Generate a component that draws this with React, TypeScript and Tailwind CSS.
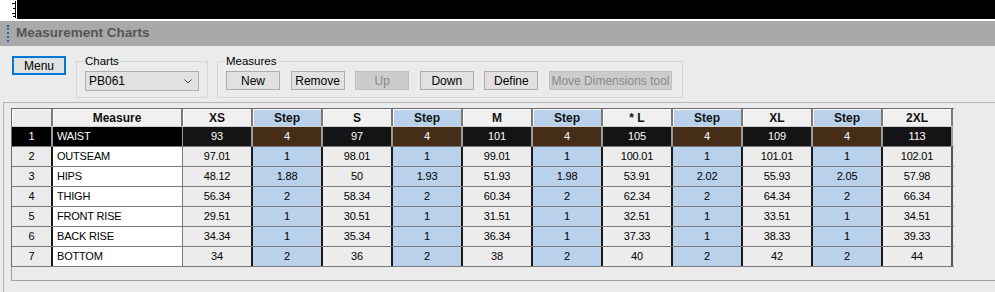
import React from "react";

const headers = ["XS", "Step", "S", "Step", "M", "Step", "* L", "Step", "XL", "Step", "2XL"];

const rows: [string, string[]][] = [
  ["WAIST", ["93", "4", "97", "4", "101", "4", "105", "4", "109", "4", "113"]],
  ["OUTSEAM", ["97.01", "1", "98.01", "1", "99.01", "1", "100.01", "1", "101.01", "1", "102.01"]],
  ["HIPS", ["48.12", "1.88", "50", "1.93", "51.93", "1.98", "53.91", "2.02", "55.93", "2.05", "57.98"]],
  ["THIGH", ["56.34", "2", "58.34", "2", "60.34", "2", "62.34", "2", "64.34", "2", "66.34"]],
  ["FRONT RISE", ["29.51", "1", "30.51", "1", "31.51", "1", "32.51", "1", "33.51", "1", "34.51"]],
  ["BACK RISE", ["34.34", "1", "35.34", "1", "36.34", "1", "37.33", "1", "38.33", "1", "39.33"]],
  ["BOTTOM", ["34", "2", "36", "2", "38", "2", "40", "2", "42", "2", "44"]],
];

function Btn({ label, disabled = false, w = "w-[54px]" }: { label: string; disabled?: boolean; w?: string }) {
  return (
    <div
      className={`${w} h-[19px] border flex items-center justify-center text-[12px] leading-none ${
        disabled ? "border-[#bfbfbf] bg-[#cccccc] text-[#8a8a8a]" : "border-[#adadad] bg-[#e1e1e1] text-black"
      }`}
    >
      {label}
    </div>
  );
}

function Group({ label, children, w }: { label: string; children: React.ReactNode; w: string }) {
  return (
    <div className={`relative ${w} h-[37px] mt-[5px] border border-[#d6d6d6] pl-[8px] pt-[9px]`}>
      <span className="absolute left-[7px] top-[-8px] bg-[#ebebeb] px-[1px] text-[11.5px] leading-[14px] text-black">
        {label}
      </span>
      {children}
    </div>
  );
}

export default function App() {
  return (
    <div
      className="w-[995px] h-[292px] overflow-hidden bg-[#ebebeb] flex flex-col"
      style={{ fontFamily: '"Liberation Sans", Arial, sans-serif' }}
    >
      {/* top strip */}
      <div className="flex h-[19px]">
        <div className="w-[17px] bg-white">
          <svg width="17" height="19" viewBox="0 0 17 19">
            <path d="M15.5 1v17" stroke="#000" strokeWidth="1" />
            <path d="M12 3.5h4M13 8.5h3M12 13.5h4M13 16.5h3" stroke="#000" strokeWidth="1" />
          </svg>
        </div>
        <div className="flex-1 bg-black" />
      </div>
      <div className="h-[2px] bg-white" />
      <div className="h-[25px] bg-[#a9a9a9] flex items-center">
        <div className="ml-[7px] h-[17px] border-l-2 border-dotted border-[#2f5fb3]" />
        <span className="ml-[7px] text-[13.5px] font-bold text-[#565656]">Measurement Charts</span>
      </div>

      {/* toolbar */}
      <div className="flex items-start pl-[12px] pt-[10px] gap-[10px]">
        <div className="w-[54px] h-[19px] border-2 border-[#0078d7] bg-[#e1e1e1] flex items-center justify-center text-[12px] leading-none">
          Menu
        </div>
        <Group label="Charts" w="w-[132px]">
          <div className="w-[114px] h-[20px] border border-[#adadad] bg-[#e1e1e1] flex items-center justify-between pl-[3px] pr-[6px] text-[12px]">
            <span>PB061</span>
            <svg width="8" height="5" viewBox="0 0 8 5">
              <path d="M0.5 0.5L4 4L7.5 0.5" fill="none" stroke="#444" strokeWidth="1" />
            </svg>
          </div>
        </Group>
        <div className="-ml-[1px]">
          <Group label="Measures" w="w-[466px]">
            <div className="flex gap-[10.6px]">
              <Btn label="New" />
              <Btn label="Remove" />
              <Btn label="Up" disabled />
              <Btn label="Down" />
              <Btn label="Define" />
              <Btn label="Move Dimensions tool" disabled w="w-[123px]" />
            </div>
          </Group>
        </div>
      </div>

      {/* table panel */}
      <div className="mt-[4px] ml-[3px] flex-1 border-l border-t border-[#b4b4b4] pt-[5px] pl-[7px]">
        <div className="flex flex-col">
          <div className="w-[943px] border-l border-t border-[#6d6d6d] text-[11px] tracking-[-0.2px]">
            {/* header */}
            <div className="flex h-[18px] border-b border-[#d0d0d0] font-bold text-[12px] tracking-normal text-[#111]">
              <div className="w-[41px] bg-[#ebebeb] border-r-2 border-r-[#7a7a7a] shadow-[inset_1px_1px_0_#fff]" />
              <div className="w-[130px] bg-[#f0f0f0] border-r-2 border-r-[#7a7a7a] shadow-[inset_1px_1px_0_#fff] flex items-center justify-center">
                Measure
              </div>
              {headers.map((h, i) => (
                <div
                  key={i}
                  className={`w-[70px] border-r-2 border-r-[#7a7a7a] shadow-[inset_1px_1px_0_#fff] flex items-center justify-center ${
                    i % 2 === 1 ? "bg-[#b9d1ea]" : "bg-[#f0f0f0]"
                  }`}
                >
                  {h}
                </div>
              ))}
            </div>
            {rows.map(([name, vals], r) => {
              const sel = r === 0;
              return (
                <div key={r} className="flex h-[20px] border-b border-[#7a7a7a]">
                  <div
                    className={`w-[41px] border-r-2 flex items-center justify-center ${
                      sel ? "bg-black text-white border-r-[#9a9a9a]" : "bg-[#ebebeb] text-black border-r-[#1a1a1a]"
                    }`}
                  >
                    {r + 1}
                  </div>
                  <div
                    className={`w-[130px] border-r flex items-center pl-[4px] ${
                      sel ? "bg-black text-white border-r-[#9a9a9a]" : "bg-white text-black border-r-[#7a7a7a]"
                    }`}
                  >
                    {name}
                  </div>
                  {vals.map((v, i) => {
                    const step = i % 2 === 1;
                    const bg = sel
                      ? step
                        ? "bg-[#462d17] text-white"
                        : "bg-[#141414] text-white"
                      : step
                        ? "bg-[#b9d1ea] text-black"
                        : "bg-[#ececec] text-black";
                    const br = sel ? "border-r-[#9a9a9a]" : i === 10 ? "border-r-[#555]" : "border-r-[#1a1a1a]";
                    return (
                      <div key={i} className={`w-[70px] border-r-2 ${br} ${bg} flex items-center justify-center`}>
                        {v}
                      </div>
                    );
                  })}
                </div>
              );
            })}
          </div>
          <div className="h-[14px] border-l border-b border-[#a0a0a0]" />
        </div>
      </div>
    </div>
  );
}
